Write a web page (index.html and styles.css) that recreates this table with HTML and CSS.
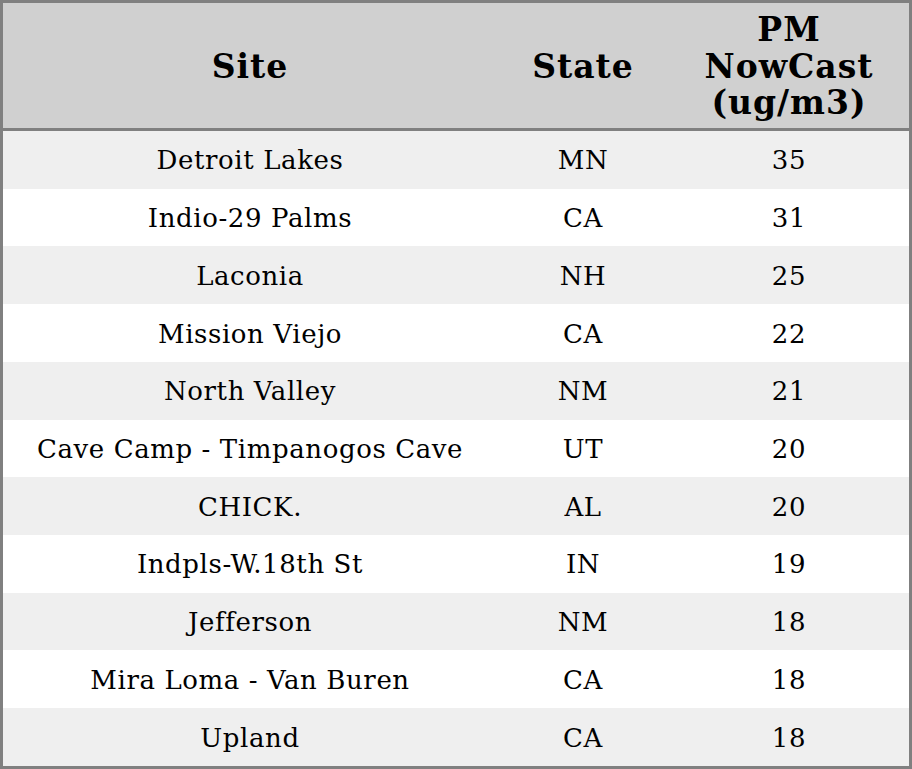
FILE: index.html
```html
<!DOCTYPE html>
<html>
<head>
<meta charset="utf-8">
<link rel="stylesheet" href="styles.css">
</head>
<body>
<div class="frame">
<table class="aq">
<colgroup><col class="c-site"><col class="c-state"><col class="c-pm"></colgroup>
<thead>
<tr><th>Site</th><th>State</th><th>PM<br>NowCast<br>(ug/m3)</th></tr>
</thead>
<tbody>
<tr><td>Detroit Lakes</td><td>MN</td><td>35</td></tr>
<tr><td>Indio-29 Palms</td><td>CA</td><td>31</td></tr>
<tr><td>Laconia</td><td>NH</td><td>25</td></tr>
<tr><td>Mission Viejo</td><td>CA</td><td>22</td></tr>
<tr><td>North Valley</td><td>NM</td><td>21</td></tr>
<tr><td>Cave Camp - Timpanogos Cave</td><td>UT</td><td>20</td></tr>
<tr><td>CHICK.</td><td>AL</td><td>20</td></tr>
<tr><td>Indpls-W.18th St</td><td>IN</td><td>19</td></tr>
<tr><td>Jefferson</td><td>NM</td><td>18</td></tr>
<tr><td>Mira Loma - Van Buren</td><td>CA</td><td>18</td></tr>
<tr><td>Upland</td><td>CA</td><td>18</td></tr>
</tbody>
</table>
</div>
</body>
</html>
```
FILE: styles.css
```css
html, body {
  margin: 0;
  padding: 0;
  background: #ffffff;
}
.frame {
  width: 912px;
  height: 769px;
  box-sizing: border-box;
  border: 3px solid #808080;
  overflow: hidden;
}
.aq {
  width: 906px;
  border-collapse: separate;
  border-spacing: 0;
  table-layout: fixed;
  font-family: "DejaVu Serif", serif;
  color: #000;
}
.c-site { width: 494px; }
.c-state { width: 172px; }
.c-pm { width: 240px; }
.aq th {
  height: 128px;
  box-sizing: border-box;
  padding: 3px 0 0;
  background: #d0d0d0;
  border-bottom: 3px solid #808080;
  font-size: 33px;
  font-weight: bold;
  line-height: 36.7px;
  letter-spacing: 1px;
  text-align: center;
  vertical-align: middle;
}
.aq td {
  height: 57.727px;
  box-sizing: border-box;
  padding: 1px 0 0;
  font-size: 26px;
  line-height: 30px;
  letter-spacing: 0.6px;
  text-align: center;
  vertical-align: middle;
}
.aq tbody tr:nth-child(odd) td { background: #efefef; }
.aq tbody tr:nth-child(even) td { background: #ffffff; }
```
